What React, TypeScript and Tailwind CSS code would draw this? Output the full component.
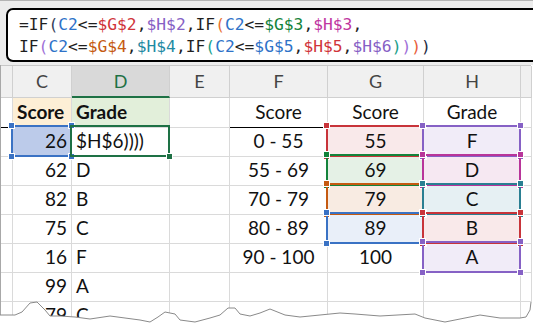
import React from "react";

type Tone = { line: string; fill: string; bg: string };

const red: Tone = { line: "border-[#c8343a]", fill: "bg-[#c8343a]", bg: "bg-[#f9e9ea]" };
const purple: Tone = { line: "border-[#8661c5]", fill: "bg-[#8661c5]", bg: "bg-[#f1ecf8]" };
const green: Tone = { line: "border-[#14833b]", fill: "bg-[#14833b]", bg: "bg-[#e5f1e6]" };
const magenta: Tone = { line: "border-[#b8359a]", fill: "bg-[#b8359a]", bg: "bg-[#f6e8f2]" };
const orange: Tone = { line: "border-[#c55a11]", fill: "bg-[#c55a11]", bg: "bg-[#f8ebe2]" };
const teal: Tone = { line: "border-[#2a7f92]", fill: "bg-[#2a7f92]", bg: "bg-[#e6f0f3]" };
const blue: Tone = { line: "border-[#3a72c4]", fill: "bg-[#3a72c4]", bg: "bg-[#e9eff9]" };

const formula: [string, string][][] = [
  [
    ["=IF", "text-[#1f1f1f]"],
    ["(", "text-[#34405a]"],
    ["C2", "text-[#2e72c8]"],
    ["<=", "text-[#1f1f1f]"],
    ["$G$2", "text-[#d0343a]"],
    [",", "text-[#1f1f1f]"],
    ["$H$2", "text-[#8661c5]"],
    [",IF", "text-[#1f1f1f]"],
    ["(", "text-[#e97132]"],
    ["C2", "text-[#2e72c8]"],
    ["<=", "text-[#1f1f1f]"],
    ["$G$3", "text-[#14833b]"],
    [",", "text-[#1f1f1f]"],
    ["$H$3", "text-[#c0359f]"],
    [",", "text-[#1f1f1f]"],
  ],
  [
    ["IF", "text-[#1f1f1f]"],
    ["(", "text-[#a070d8]"],
    ["C2", "text-[#2e72c8]"],
    ["<=", "text-[#1f1f1f]"],
    ["$G$4", "text-[#c55a11]"],
    [",", "text-[#1f1f1f]"],
    ["$H$4", "text-[#1f8aa3]"],
    [",IF", "text-[#1f1f1f]"],
    ["(", "text-[#20a08a]"],
    ["C2", "text-[#2e72c8]"],
    ["<=", "text-[#1f1f1f]"],
    ["$G$5", "text-[#2e72c8]"],
    [",", "text-[#1f1f1f]"],
    ["$H$5", "text-[#d0343a]"],
    [",", "text-[#1f1f1f]"],
    ["$H$6", "text-[#8661c5]"],
    [")", "text-[#20a08a]"],
    [")", "text-[#a070d8]"],
    [")", "text-[#e9603a]"],
    [")", "text-[#1f2a44]"],
  ],
];

const rows = [
  { c: "26", d: "$H$6))))", f: "0 - 55", g: "55", h: "F", gt: red, ht: purple },
  { c: "62", d: "D", f: "55 - 69", g: "69", h: "D", gt: green, ht: magenta },
  { c: "82", d: "B", f: "70 - 79", g: "79", h: "C", gt: orange, ht: teal },
  { c: "75", d: "C", f: "80 - 89", g: "89", h: "B", gt: blue, ht: red },
  { c: "16", d: "F", f: "90 - 100", g: "100", h: "A", gt: null, ht: purple },
  { c: "99", d: "A", f: "", g: "", h: "", gt: null, ht: null },
  { c: "79", d: "C", f: "", g: "", h: "", gt: null, ht: null },
];

const grid = "grid grid-cols-[12px_59px_98px_60px_98px_96px_97px_11px]";

function Outline({ tone, corners = "all" }: { tone: Tone; corners?: "all" | "br" }) {
  const dot = `absolute size-[7px] border border-white ${tone.fill}`;
  return (
    <div className={`pointer-events-none absolute -left-[2px] -top-[2px] -right-px -bottom-px z-10 border-2 ${tone.line}`}>
      {corners === "all" && (
        <>
          <div className={`${dot} -left-[5px] -top-[5px]`} />
          <div className={`${dot} -right-[5px] -top-[5px]`} />
          <div className={`${dot} -left-[5px] -bottom-[5px]`} />
        </>
      )}
      <div className={`${dot} -right-[5px] -bottom-[5px]`} />
    </div>
  );
}

function Cell({ children, className = "" }: { children?: React.ReactNode; className?: string }) {
  return (
    <div className={`relative flex h-full items-center border-b border-r border-[#dadada] ${className}`}>
      {children}
    </div>
  );
}

const tear =
  "0,315 15,315 22,312 30,303 37,302 45,310 50,316 60,316 75,317 90,319 110,316 125,318 140,320 150,322 158,317 165,312 175,314 180,320 195,322 210,318 220,315 228,308 235,308 240,314 250,316 260,313 270,309 285,315 300,317 320,315 340,313 355,314 380,316 415,314 425,318 445,322 465,318 480,315 500,318 520,318 526,317 530,310 531,302";

export default function App() {
  return (
    <div className="relative h-[334px] w-[533px] overflow-hidden bg-white font-['Lato',sans-serif] text-[19px] text-[#111]">
      {/* formula bar */}
      <div className="h-[65px] overflow-hidden border-t border-[#b4b4b4] bg-[#ececec] pt-[7px] pl-[6px]">
        <div className="h-[54px] w-[560px] rounded-[7px] border-2 border-black bg-white pl-[11px] pt-[4px] font-['DejaVu_Sans_Mono',monospace] text-[16.3px] leading-[22px]">
          {formula.map((line, i) => (
            <div key={i} className="whitespace-pre">
              {line.map(([t, c], j) => (
                <span key={j} className={c}>
                  {t}
                </span>
              ))}
            </div>
          ))}
        </div>
      </div>

      {/* sheet */}
      <div className="w-[531px] border-l border-[#a8a8a8]">
        <div className={`${grid} h-[33px] border-t border-[#c8c8c8] bg-[#f0f0f0] text-[18px] text-[#444]`}>
          <div className="border-b border-r border-[#d0d0d0]" />
          <div className="flex items-center justify-center border-b border-r border-[#d0d0d0]">C</div>
          <div className="flex items-center justify-center border-b-2 border-r border-b-[#1e7145] border-r-[#d0d0d0] bg-[#d9d9d9] text-[#1e7145]">
            D
          </div>
          <div className="flex items-center justify-center border-b border-r border-[#d0d0d0]">E</div>
          <div className="flex items-center justify-center border-b border-r border-[#d0d0d0]">F</div>
          <div className="flex items-center justify-center border-b border-r border-[#d0d0d0]">G</div>
          <div className="flex items-center justify-center border-b border-r border-[#d0d0d0]">H</div>
          <div className="border-b border-r border-[#d0d0d0]" />
        </div>

        {/* title row */}
        <div className={`${grid} h-[29px]`}>
          <Cell className="border-b-black" />
          <Cell className="bg-[#fdefd6] pl-[4px] font-bold">Score</Cell>
          <Cell className="bg-[#e2efda] pl-[4px] font-bold">Grade</Cell>
          <Cell />
          <Cell className="justify-center border-b-black">Score</Cell>
          <Cell className="justify-center">Score</Cell>
          <Cell className="justify-center">Grade</Cell>
          <Cell />
        </div>

        {rows.map((r, i) => (
          <div key={i} className={`${grid} h-[29px]`}>
            <Cell />
            <Cell className={`justify-end pr-[4px] ${i === 0 ? "bg-[#bccbea]" : ""}`}>
              {r.c}
              {i === 0 && <Outline tone={blue} />}
            </Cell>
            <Cell className="pl-[4px]">
              {r.d}
              {i === 0 && (
                <Outline tone={{ line: "border-[#1e7145]", fill: "bg-[#1e7145]", bg: "" }} corners="br" />
              )}
            </Cell>
            <Cell />
            <Cell className="justify-center">{r.f}</Cell>
            <Cell className={`justify-center ${r.gt ? r.gt.bg : ""}`}>
              {r.g}
              {r.gt && <Outline tone={r.gt} />}
            </Cell>
            <Cell className={`justify-center ${r.ht ? r.ht.bg : ""}`}>
              {r.h}
              {r.ht && <Outline tone={r.ht} />}
            </Cell>
            <Cell />
          </div>
        ))}
      </div>

      {/* torn bottom edge */}
      <svg className="absolute left-0 top-0 z-20" width="533" height="334" viewBox="0 0 533 334">
        <polygon points={`${tear} 533,302 533,334 0,334`} fill="#fff" />
        <polyline points={tear} fill="none" stroke="#8a8a8a" strokeWidth="1" />
      </svg>
    </div>
  );
}
